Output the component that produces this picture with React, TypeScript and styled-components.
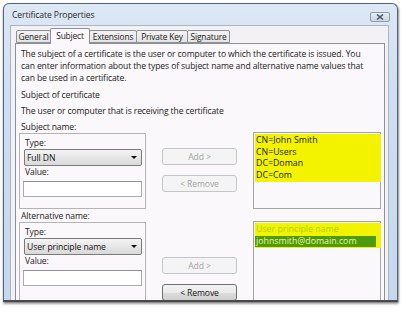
import React from 'react';
import styled, { createGlobalStyle } from 'styled-components';

const GlobalStyle = createGlobalStyle`
    html, body {
        margin: 0;
        padding: 0;
        background: #ffffff;
    }
    body {
        font-family: "Open Sans", "Noto Sans", sans-serif;
        color: #1a1a1a;
    }
`;

const Page = styled.div`
    width: 403px;
    height: 313px;
    box-sizing: border-box;
    padding: 3px 0 0 3px;
    overflow: hidden;
`;

const Window = styled.div`
    width: 395px;
    height: 299px;
    box-sizing: border-box;
    display: flex;
    flex-direction: column;
    padding: 0 8px 0 6px;
    border: 1px solid #56657a;
    border-bottom: 2px solid #4a4a4a;
    border-radius: 6px 6px 0 0;
    background: linear-gradient(180deg, #dde8f5 0%, #cfdef1 30%, #c6d8ee 100%);
    box-shadow: 1px 1px 2px rgba(0, 0, 0, 0.35), 0 2px 3px rgba(0, 0, 0, 0.3);
    overflow: hidden;
`;

const TitleBar = styled.div`
    height: 21px;
    flex: none;
    display: flex;
    align-items: center;
    justify-content: space-between;
`;

const Title = styled.span`
    margin-left: 2px;
    font-size: 8.6px;
    letter-spacing: -0.1px;
    color: #2a2a2a;
`;

const CloseButton = styled.div`
    width: 20px;
    height: 10px;
    margin: 4px -1px 0 0;
    box-sizing: border-box;
    display: flex;
    align-items: center;
    justify-content: center;
    border: 1px solid #8c9bb0;
    border-radius: 2px;
    background: linear-gradient(180deg, #e9eef5 0%, #cbd6e4 100%);
`;

const Client = styled.div`
    flex: 1;
    display: flex;
    flex-direction: column;
    padding: 2px 3px 0 4px;
    border: 1px solid #a6b5c8;
    border-bottom: none;
    background: #f4f1f4;
`;

const TabRow = styled.div`
    height: 15px;
    display: flex;
    align-items: flex-end;
    padding-left: 2px;
    position: relative;
    z-index: 1;
`;

const Tab = styled.div<{ $w: number; $active?: boolean }>`
    width: ${p => p.$w}px;
    height: ${p => (p.$active ? 16 : 13)}px;
    margin-left: -1px;
    margin-bottom: ${p => (p.$active ? -1 : 0)}px;
    box-sizing: border-box;
    display: flex;
    align-items: center;
    justify-content: center;
    padding-bottom: ${p => (p.$active ? 2 : 0)}px;
    border: 1px solid #8d9096;
    border-bottom: ${p => (p.$active ? 'none' : '1px solid #8d9096')};
    border-radius: 2px 2px 0 0;
    background: ${p => (p.$active ? '#fbf8fb' : 'linear-gradient(180deg, #f3f3f3 0%, #e4e4e4 100%)')};
    font-size: 8.4px;
    letter-spacing: -0.15px;
    color: #1a1a1a;
`;

const Panel = styled.div`
    flex: 1;
    display: flex;
    flex-direction: column;
    padding: 4px 3px 0 3px;
    border: 1px solid #8d9096;
    border-bottom: none;
    background: #fbf8fb;
`;

const Text = styled.div<{ $gap?: number }>`
    margin: ${p => p.$gap || 0}px 0 0 2px;
    font-size: 8.6px;
    line-height: 12px;
    letter-spacing: -0.12px;
    white-space: nowrap;
`;

const Label = styled.div<{ $gap?: number; $inset?: number }>`
    margin: ${p => p.$gap || 0}px 0 0 ${p => p.$inset ?? 2}px;
    font-size: 8.6px;
    line-height: 11px;
    letter-spacing: -0.12px;
    white-space: nowrap;
`;

const Section = styled.div`
    display: grid;
    grid-template-columns: 127px 1fr 128px;
`;

const GroupBox = styled.div<{ $h: number }>`
    height: ${p => p.$h}px;
    box-sizing: border-box;
    display: flex;
    flex-direction: column;
    padding: 4px 3px 0 4px;
    border: 1px solid #b4b4b4;
`;

const Select = styled.div`
    height: 17px;
    box-sizing: border-box;
    display: flex;
    align-items: center;
    justify-content: space-between;
    padding: 0 4px 0 2px;
    border: 1px solid #7a7a7a;
    border-radius: 2px;
    background: linear-gradient(180deg, #f4f4f4 0%, #e6e6e6 50%, #d9d9d9 100%);
    font-size: 8.6px;
    letter-spacing: -0.1px;
    color: #111;
`;

const Arrow = styled.span`
    width: 0;
    height: 0;
    border-left: 3px solid transparent;
    border-right: 3px solid transparent;
    border-top: 3px solid #111;
`;

const Input = styled.div`
    height: 16px;
    margin: 3px 0 0 -1px;
    box-sizing: border-box;
    border: 1px solid #a9abb1;
    border-top-color: #8e9097;
    background: #ffffff;
`;

const ButtonColumn = styled.div<{ $top: number }>`
    display: flex;
    flex-direction: column;
    align-items: center;
    gap: 10px;
    padding-top: ${p => p.$top}px;
`;

const Button = styled.div<{ $disabled?: boolean }>`
    width: 75px;
    height: 17px;
    box-sizing: border-box;
    display: flex;
    align-items: center;
    justify-content: center;
    border: 1px solid ${p => (p.$disabled ? '#c3c6c9' : '#707070')};
    border-radius: 3px;
    background: ${p =>
        p.$disabled ? '#f4f4f4' : 'linear-gradient(180deg, #f2f2f2 0%, #ebebeb 50%, #dddddd 51%, #cfcfcf 100%)'};
    font-size: 8.6px;
    letter-spacing: -0.1px;
    color: ${p => (p.$disabled ? '#a3a3a3' : '#111')};
`;

const ListBox = styled.div<{ $h: number }>`
    height: ${p => p.$h}px;
    margin-top: -1px;
    box-sizing: border-box;
    padding: 1px 0 0 1px;
    border: 1px solid #a3a3a3;
    background: #fbf8fb;
`;

const Highlight = styled.div`
    display: flex;
    flex-direction: column;
    align-items: flex-start;
    padding: 1px 0 1px 0;
    margin-right: -1px;
    background: #f3f300;
`;

const ListItem = styled.div<{ $tone?: 'plain' | 'label' | 'selected' }>`
    padding: 0 2px 0 1px;
    font-size: 8.8px;
    line-height: 11.6px;
    white-space: nowrap;
    color: ${p => (p.$tone === 'label' ? '#a9d400' : p.$tone === 'selected' ? '#e9f7a0' : '#1c1c00')};
    background: ${p => (p.$tone === 'selected' ? '#4d9a0c' : 'transparent')};
    align-self: ${p => (p.$tone === 'selected' ? 'stretch' : 'auto')};
    margin-right: ${p => (p.$tone === 'selected' ? 5 : 0)}px;
`;

const tabs = [
    { name: 'General', w: 35 },
    { name: 'Subject', w: 40, active: true },
    { name: 'Extensions', w: 48 },
    { name: 'Private Key', w: 52 },
    { name: 'Signature', w: 43 },
];

function NameFields({ type }: { type: string }) {
    return (
        <>
            <Label $inset={1}>Type:</Label>
            <Select>
                <span>{type}</span>
                <Arrow />
            </Select>
            <Label $inset={1} $gap={1}>
                Value:
            </Label>
            <Input />
        </>
    );
}

export default function App() {
    return (
        <Page>
            <GlobalStyle />
            <Window>
                <TitleBar>
                    <Title>Certificate Properties</Title>
                    <CloseButton>
                        <svg width="8" height="6" viewBox="0 0 8 6">
                            <path d="M1 0.5 L7 5.5 M7 0.5 L1 5.5" stroke="#4c5a6c" strokeWidth="1.6" />
                        </svg>
                    </CloseButton>
                </TitleBar>
                <Client>
                    <TabRow>
                        {tabs.map(t => (
                            <Tab key={t.name} $w={t.w} $active={t.active}>
                                {t.name}
                            </Tab>
                        ))}
                    </TabRow>
                    <Panel>
                        <Text>
                            The subject of a certificate is the user or computer to which the certificate is issued. You
                        </Text>
                        <Text>
                            can enter information about the types of subject name and alternative name values that
                        </Text>
                        <Text>can be used in a certificate.</Text>
                        <Text $gap={5}>Subject of certificate</Text>
                        <Text $gap={4}>The user or computer that is receiving the certificate</Text>
                        <Label $gap={5}>Subject name:</Label>
                        <Section>
                            <GroupBox $h={76}>
                                <NameFields type="Full DN" />
                            </GroupBox>
                            <ButtonColumn $top={15}>
                                <Button $disabled>Add &gt;</Button>
                                <Button $disabled>&lt; Remove</Button>
                            </ButtonColumn>
                            <ListBox $h={77}>
                                <Highlight>
                                    <ListItem>CN=John Smith</ListItem>
                                    <ListItem>CN=Users</ListItem>
                                    <ListItem>DC=Doman</ListItem>
                                    <ListItem>DC=Com</ListItem>
                                </Highlight>
                            </ListBox>
                        </Section>
                        <Label $gap={2}>Alternative name:</Label>
                        <Section>
                            <GroupBox $h={100}>
                                <NameFields type="User principle name" />
                            </GroupBox>
                            <ButtonColumn $top={35}>
                                <Button $disabled>Add &gt;</Button>
                                <Button>&lt; Remove</Button>
                            </ButtonColumn>
                            <ListBox $h={100}>
                                <Highlight>
                                    <ListItem $tone="label">User principle name</ListItem>
                                    <ListItem $tone="selected">johnsmith@domain.com</ListItem>
                                </Highlight>
                            </ListBox>
                        </Section>
                    </Panel>
                </Client>
            </Window>
        </Page>
    );
}
